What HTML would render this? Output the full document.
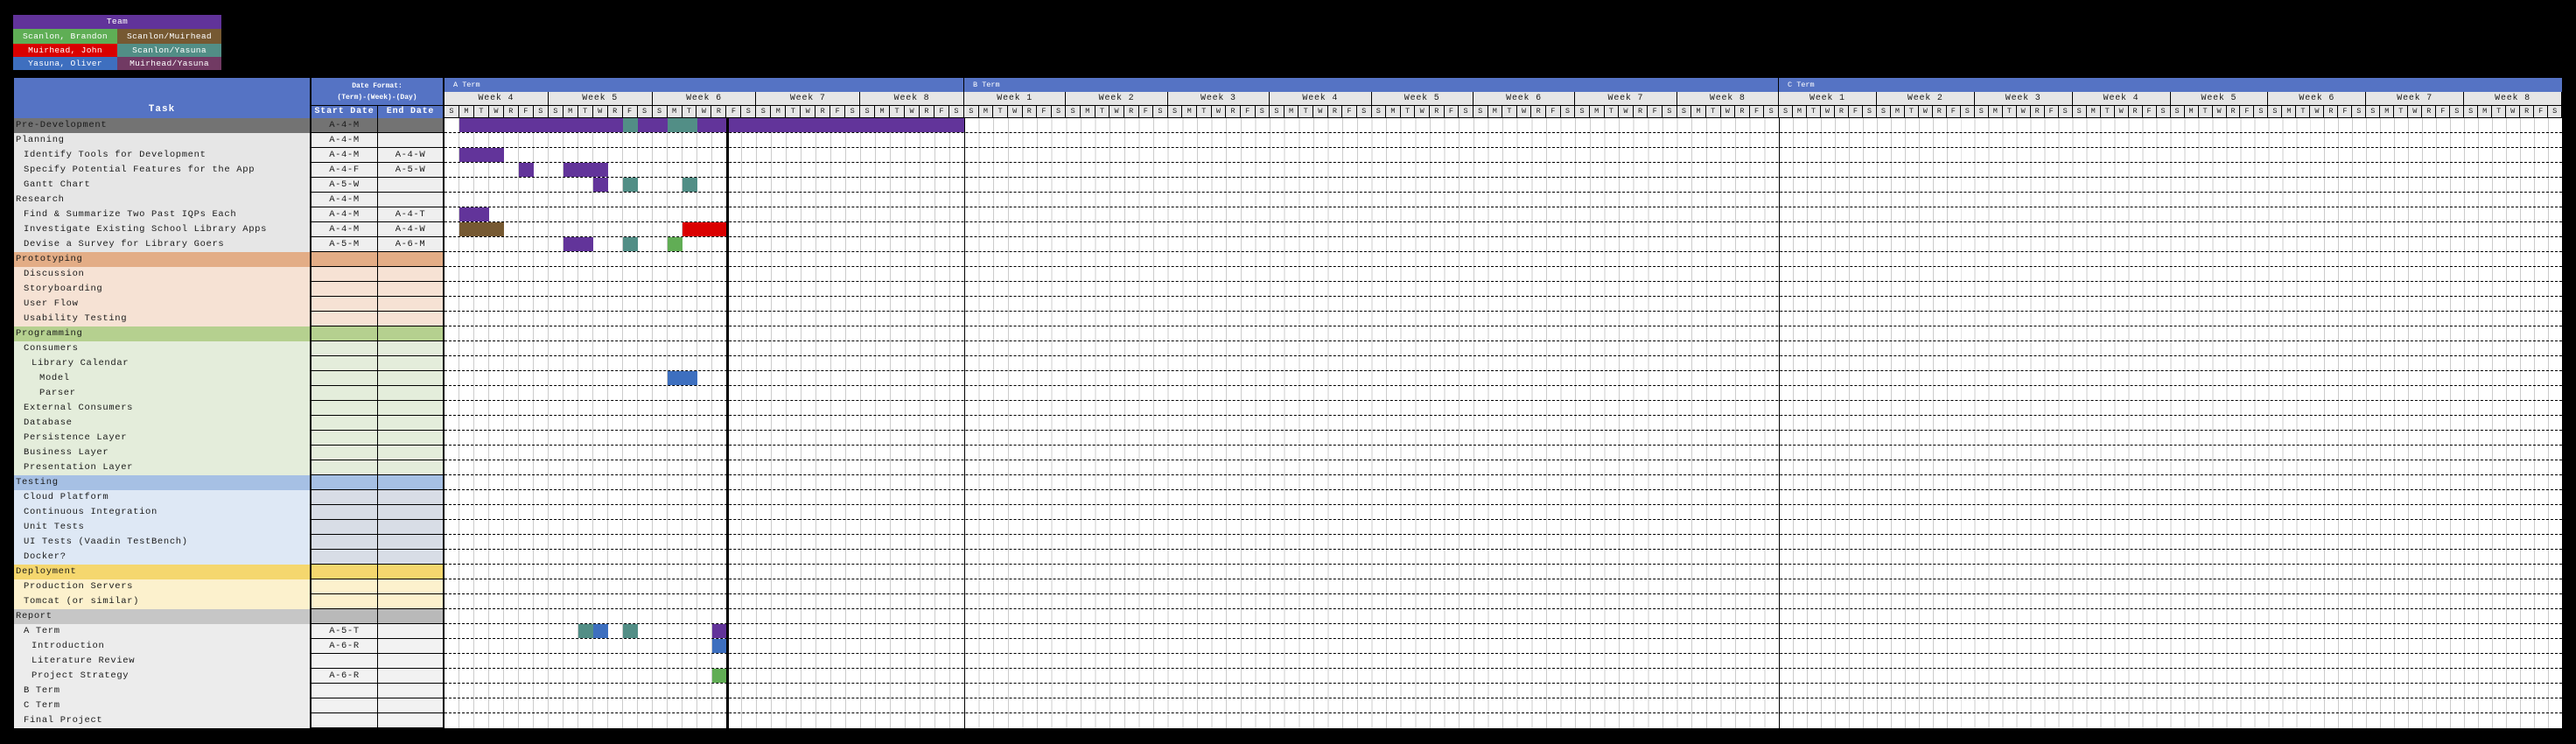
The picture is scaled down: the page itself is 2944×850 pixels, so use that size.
<!DOCTYPE html>
<html><head><meta charset="utf-8"><style>
*{margin:0;padding:0;box-sizing:border-box}
body{width:2944px;height:850px;background:#000;position:relative;overflow:hidden;font-family:"Liberation Mono",monospace;color:#1a1a1a}
.a{position:absolute}
.lg div{position:absolute;height:16px;color:#fff;font-size:9.6px;letter-spacing:.3px;text-align:center;line-height:16px}
.t{position:absolute;left:16px;width:338px;height:17px;font-size:10.5px;letter-spacing:.65px;line-height:17px;white-space:pre}
.d{position:absolute;height:17px;border-bottom:1px solid #000;font-size:10.5px;letter-spacing:.6px;line-height:17px;text-align:center}
.term{position:absolute;top:89px;height:16px;background:#5573c4;color:#fff;font-size:8.5px;line-height:16px;padding-left:10px;border-right:1px solid #000}
.wk{position:absolute;top:105px;height:16px;display:flex;background:#e6e6e6;border-bottom:1px solid #000}
.wk div{flex:1;border-right:1px solid #000;text-align:center;font-size:10px;letter-spacing:.8px;line-height:16px}
.dy{position:absolute;top:121px;height:14px;display:flex;background:#e6e6e6;border-bottom:1px solid #000}
.dy span{flex:1;border-right:1px solid #000;text-align:center;font-size:8.5px;line-height:13px}
.body{position:absolute;top:135px;height:697px;background-color:#fff}
.r{position:absolute;left:508px;width:2420px;height:17px;border-bottom:1px dashed #000}
.b{position:absolute;height:16px}
.P{background:#62349a}.T{background:#528e86}.Br{background:#765932}.R{background:#da0000}.G{background:#61ad55}.Bl{background:#3d6fbf}
</style></head><body>
<div class="lg">
<div style="left:15px;top:17px;width:238px;background:#61339a">Team</div>
<div style="left:15px;top:33px;width:119px;height:17px;line-height:17px;background:#5fae55">Scanlon, Brandon</div>
<div style="left:134px;top:33px;width:119px;height:17px;line-height:17px;background:#765932">Scanlon/Muirhead</div>
<div style="left:15px;top:50px;width:119px;height:15px;line-height:15px;background:#da0000">Muirhead, John</div>
<div style="left:134px;top:50px;width:119px;height:15px;line-height:15px;background:#528e86">Scanlon/Yasuna</div>
<div style="left:15px;top:65px;width:119px;height:15px;line-height:15px;background:#3e6fbf">Yasuna, Oliver</div>
<div style="left:134px;top:65px;width:119px;height:15px;line-height:15px;background:#713a63">Muirhead/Yasuna</div>
</div>

<div class="a" style="left:16px;top:89px;width:338px;height:46px;background:#5573c4;color:#fff;font-size:11px;font-weight:bold;letter-spacing:1px;text-align:center;padding-top:30px">Task</div>
<div class="a" style="left:356px;top:89px;width:150px;height:31px;background:#5573c4;color:#fff;font-size:8px;font-weight:bold;text-align:center;line-height:13px;padding-top:3px">Date Format:<br>(Term)-(Week)-(Day)</div>
<div class="a" style="left:356px;top:121px;width:75px;height:14px;background:#5573c4;color:#fff;font-size:10px;font-weight:bold;text-align:center;line-height:14px;letter-spacing:.8px">Start Date</div>
<div class="a" style="left:432px;top:121px;width:74px;height:14px;background:#5573c4;color:#fff;font-size:10px;font-weight:bold;text-align:center;line-height:14px;letter-spacing:.8px">End Date</div>

<!-- task rows -->
<div class="t" style="top:135px;background:#737373;padding-left:2px">Pre-Development</div>
<div class="t" style="top:152px;background:#e6e6e6;padding-left:2px">Planning</div>
<div class="t" style="top:169px;background:#e6e6e6;padding-left:11px">Identify Tools for Development</div>
<div class="t" style="top:186px;background:#e6e6e6;padding-left:11px">Specify Potential Features for the App</div>
<div class="t" style="top:203px;background:#e6e6e6;padding-left:11px">Gantt Chart</div>
<div class="t" style="top:220px;background:#e6e6e6;padding-left:2px">Research</div>
<div class="t" style="top:237px;background:#e6e6e6;padding-left:11px">Find &amp; Summarize Two Past IQPs Each</div>
<div class="t" style="top:254px;background:#e6e6e6;padding-left:11px">Investigate Existing School Library Apps</div>
<div class="t" style="top:271px;background:#e6e6e6;padding-left:11px">Devise a Survey for Library Goers</div>
<div class="t" style="top:288px;background:#e3ad86;padding-left:2px">Prototyping</div>
<div class="t" style="top:305px;background:#f6e2d4;padding-left:11px">Discussion</div>
<div class="t" style="top:322px;background:#f6e2d4;padding-left:11px">Storyboarding</div>
<div class="t" style="top:339px;background:#f6e2d4;padding-left:11px">User Flow</div>
<div class="t" style="top:356px;background:#f6e2d4;padding-left:11px">Usability Testing</div>
<div class="t" style="top:373px;background:#b5d08f;padding-left:2px">Programming</div>
<div class="t" style="top:390px;background:#e4eddb;padding-left:11px">Consumers</div>
<div class="t" style="top:407px;background:#e4eddb;padding-left:20px">Library Calendar</div>
<div class="t" style="top:424px;background:#e4eddb;padding-left:29px">Model</div>
<div class="t" style="top:441px;background:#e4eddb;padding-left:29px">Parser</div>
<div class="t" style="top:458px;background:#e4eddb;padding-left:11px">External Consumers</div>
<div class="t" style="top:475px;background:#e4eddb;padding-left:11px">Database</div>
<div class="t" style="top:492px;background:#e4eddb;padding-left:11px">Persistence Layer</div>
<div class="t" style="top:509px;background:#e4eddb;padding-left:11px">Business Layer</div>
<div class="t" style="top:526px;background:#e4eddb;padding-left:11px">Presentation Layer</div>
<div class="t" style="top:543px;background:#a6c0e4;padding-left:2px">Testing</div>
<div class="t" style="top:560px;background:#dee8f5;padding-left:11px">Cloud Platform</div>
<div class="t" style="top:577px;background:#dee8f5;padding-left:11px">Continuous Integration</div>
<div class="t" style="top:594px;background:#dee8f5;padding-left:11px">Unit Tests</div>
<div class="t" style="top:611px;background:#dee8f5;padding-left:11px">UI Tests (Vaadin TestBench)</div>
<div class="t" style="top:628px;background:#dee8f5;padding-left:11px">Docker?</div>
<div class="t" style="top:645px;background:#f5d76e;padding-left:2px">Deployment</div>
<div class="t" style="top:662px;background:#fcf1cd;padding-left:11px">Production Servers</div>
<div class="t" style="top:679px;background:#fcf1cd;padding-left:11px">Tomcat (or similar)</div>
<div class="t" style="top:696px;background:#c6c6c6;padding-left:2px">Report</div>
<div class="t" style="top:713px;background:#ececec;padding-left:11px">A Term</div>
<div class="t" style="top:730px;background:#ececec;padding-left:20px">Introduction</div>
<div class="t" style="top:747px;background:#ececec;padding-left:20px">Literature Review</div>
<div class="t" style="top:764px;background:#ececec;padding-left:20px">Project Strategy</div>
<div class="t" style="top:781px;background:#ececec;padding-left:11px">B Term</div>
<div class="t" style="top:798px;background:#ececec;padding-left:11px">C Term</div>
<div class="t" style="top:815px;background:#ececec;padding-left:11px">Final Project</div>

<!-- date columns backgrounds -->
<div class="a" style="left:356px;top:135px;width:150px;height:17px;background:#737373"></div>
<div class="a" style="left:356px;top:152px;width:150px;height:136px;background:#efefef"></div>
<div class="a" style="left:356px;top:288px;width:150px;height:17px;background:#e3ad86"></div>
<div class="a" style="left:356px;top:305px;width:150px;height:68px;background:#f6e2d4"></div>
<div class="a" style="left:356px;top:373px;width:150px;height:17px;background:#b5d08f"></div>
<div class="a" style="left:356px;top:390px;width:150px;height:153px;background:#e4eddb"></div>
<div class="a" style="left:356px;top:543px;width:150px;height:17px;background:#a6c0e4"></div>
<div class="a" style="left:356px;top:560px;width:150px;height:85px;background:#d8dde6"></div>
<div class="a" style="left:356px;top:645px;width:150px;height:17px;background:#f5d76e"></div>
<div class="a" style="left:356px;top:662px;width:150px;height:34px;background:#fcf1cd"></div>
<div class="a" style="left:356px;top:696px;width:150px;height:17px;background:#b9b9b9"></div>
<div class="a" style="left:356px;top:713px;width:150px;height:119px;background:#f2f2f2"></div>
<div class="a" style="left:354px;top:135px;width:2px;height:697px;background:#000"></div>
<div class="a" style="left:431px;top:121px;width:1px;height:711px;background:#000"></div>
<div class="a" style="left:356px;top:120px;width:150px;height:1px;background:#000"></div>
<div class="a" style="left:506px;top:89px;width:2px;height:743px;background:#000"></div>
<div class="a" style="left:356px;top:135px;width:150px;height:697px;background:repeating-linear-gradient(to bottom,transparent 0 16px,#000 16px 17px)"></div>
<div class="a" style="left:356px;top:135px;width:75px;font-size:10.5px;letter-spacing:.6px;line-height:17px;text-align:center">A-4-M<br>A-4-M<br>A-4-M<br>A-4-F<br>A-5-W<br>A-4-M<br>A-4-M<br>A-4-M<br>A-5-M</div>
<div class="a" style="left:432px;top:169px;width:74px;font-size:10.5px;letter-spacing:.6px;line-height:17px;text-align:center">A-4-W<br>A-5-W<br><br><br>A-4-T<br>A-4-W<br>A-6-M</div>
<div class="a" style="left:356px;top:713px;width:75px;font-size:10.5px;letter-spacing:.6px;line-height:17px;text-align:center">A-5-T<br>A-6-R<br><br>A-6-R</div>

<!-- chart header -->
<div class="term" style="left:508px;width:594px">A Term</div>
<div class="term" style="left:1102px;width:931px">B Term</div>
<div class="term" style="left:2033px;width:895px;border-right:none">C Term</div>
<div class="wk" style="left:508px;width:594px"><div>Week 4</div><div>Week 5</div><div>Week 6</div><div>Week 7</div><div>Week 8</div></div>
<div class="wk" style="left:1102px;width:931px"><div>Week 1</div><div>Week 2</div><div>Week 3</div><div>Week 4</div><div>Week 5</div><div>Week 6</div><div>Week 7</div><div>Week 8</div></div>
<div class="wk" style="left:2033px;width:895px"><div>Week 1</div><div>Week 2</div><div>Week 3</div><div>Week 4</div><div>Week 5</div><div>Week 6</div><div>Week 7</div><div>Week 8</div></div>
<div class="dy" style="left:508px;width:594px"><span>S</span><span>M</span><span>T</span><span>W</span><span>R</span><span>F</span><span>S</span><span>S</span><span>M</span><span>T</span><span>W</span><span>R</span><span>F</span><span>S</span><span>S</span><span>M</span><span>T</span><span>W</span><span>R</span><span>F</span><span>S</span><span>S</span><span>M</span><span>T</span><span>W</span><span>R</span><span>F</span><span>S</span><span>S</span><span>M</span><span>T</span><span>W</span><span>R</span><span>F</span><span>S</span></div>
<div class="dy" style="left:1102px;width:931px"><span>S</span><span>M</span><span>T</span><span>W</span><span>R</span><span>F</span><span>S</span><span>S</span><span>M</span><span>T</span><span>W</span><span>R</span><span>F</span><span>S</span><span>S</span><span>M</span><span>T</span><span>W</span><span>R</span><span>F</span><span>S</span><span>S</span><span>M</span><span>T</span><span>W</span><span>R</span><span>F</span><span>S</span><span>S</span><span>M</span><span>T</span><span>W</span><span>R</span><span>F</span><span>S</span><span>S</span><span>M</span><span>T</span><span>W</span><span>R</span><span>F</span><span>S</span><span>S</span><span>M</span><span>T</span><span>W</span><span>R</span><span>F</span><span>S</span><span>S</span><span>M</span><span>T</span><span>W</span><span>R</span><span>F</span><span>S</span></div>
<div class="dy" style="left:2033px;width:895px"><span>S</span><span>M</span><span>T</span><span>W</span><span>R</span><span>F</span><span>S</span><span>S</span><span>M</span><span>T</span><span>W</span><span>R</span><span>F</span><span>S</span><span>S</span><span>M</span><span>T</span><span>W</span><span>R</span><span>F</span><span>S</span><span>S</span><span>M</span><span>T</span><span>W</span><span>R</span><span>F</span><span>S</span><span>S</span><span>M</span><span>T</span><span>W</span><span>R</span><span>F</span><span>S</span><span>S</span><span>M</span><span>T</span><span>W</span><span>R</span><span>F</span><span>S</span><span>S</span><span>M</span><span>T</span><span>W</span><span>R</span><span>F</span><span>S</span><span>S</span><span>M</span><span>T</span><span>W</span><span>R</span><span>F</span><span>S</span></div>

<!-- chart body -->
<div class="body" style="left:508px;width:594px;background-image:repeating-linear-gradient(to right,transparent 0 16px,#ccc 16px 17px)"></div>
<div class="body" style="left:1102px;width:931px;border-left:1px solid #000;background-image:repeating-linear-gradient(to right,transparent 0 15.6px,#ccc 15.6px 16.625px)"></div>
<div class="body" style="left:2033px;width:895px;border-left:1px solid #000;background-image:repeating-linear-gradient(to right,transparent 0 15px,#ccc 15px 15.98px)"></div>

<!-- bars -->
<div class="b P" style="left:525px;top:135px;width:187px"></div>
<div class="b T" style="left:712px;top:135px;width:17px"></div>
<div class="b P" style="left:729px;top:135px;width:34px"></div>
<div class="b T" style="left:763px;top:135px;width:34px"></div>
<div class="b P" style="left:797px;top:135px;width:305px"></div>
<div class="b P" style="left:525px;top:169px;width:51px"></div>
<div class="b P" style="left:593px;top:186px;width:17px"></div>
<div class="b P" style="left:644px;top:186px;width:51px"></div>
<div class="b P" style="left:678px;top:203px;width:17px"></div>
<div class="b T" style="left:712px;top:203px;width:17px"></div>
<div class="b T" style="left:780px;top:203px;width:17px"></div>
<div class="b P" style="left:525px;top:237px;width:34px"></div>
<div class="b Br" style="left:525px;top:254px;width:51px"></div>
<div class="b R" style="left:780px;top:254px;width:51px"></div>
<div class="b P" style="left:644px;top:271px;width:34px"></div>
<div class="b T" style="left:712px;top:271px;width:17px"></div>
<div class="b G" style="left:763px;top:271px;width:17px"></div>
<div class="b Bl" style="left:763px;top:424px;width:34px"></div>
<div class="b T" style="left:661px;top:713px;width:17px"></div>
<div class="b Bl" style="left:678px;top:713px;width:17px"></div>
<div class="b T" style="left:712px;top:713px;width:17px"></div>
<div class="b P" style="left:814px;top:713px;width:16px"></div>
<div class="b Bl" style="left:814px;top:730px;width:16px"></div>
<div class="b G" style="left:814px;top:764px;width:16px"></div>

<!-- dashed row lines -->
<div class="r" style="top:135px"></div><div class="r" style="top:152px"></div><div class="r" style="top:169px"></div><div class="r" style="top:186px"></div><div class="r" style="top:203px"></div><div class="r" style="top:220px"></div><div class="r" style="top:237px"></div><div class="r" style="top:254px"></div><div class="r" style="top:271px"></div><div class="r" style="top:288px"></div><div class="r" style="top:305px"></div><div class="r" style="top:322px"></div><div class="r" style="top:339px"></div><div class="r" style="top:356px"></div><div class="r" style="top:373px"></div><div class="r" style="top:390px"></div><div class="r" style="top:407px"></div><div class="r" style="top:424px"></div><div class="r" style="top:441px"></div><div class="r" style="top:458px"></div><div class="r" style="top:475px"></div><div class="r" style="top:492px"></div><div class="r" style="top:509px"></div><div class="r" style="top:526px"></div><div class="r" style="top:543px"></div><div class="r" style="top:560px"></div><div class="r" style="top:577px"></div><div class="r" style="top:594px"></div><div class="r" style="top:611px"></div><div class="r" style="top:628px"></div><div class="r" style="top:645px"></div><div class="r" style="top:662px"></div><div class="r" style="top:679px"></div><div class="r" style="top:696px"></div><div class="r" style="top:713px"></div><div class="r" style="top:730px"></div><div class="r" style="top:747px"></div><div class="r" style="top:764px"></div><div class="r" style="top:781px"></div><div class="r" style="top:798px"></div>

<div class="a" style="left:830px;top:135px;width:3px;height:697px;background:#000"></div>
</body></html>
